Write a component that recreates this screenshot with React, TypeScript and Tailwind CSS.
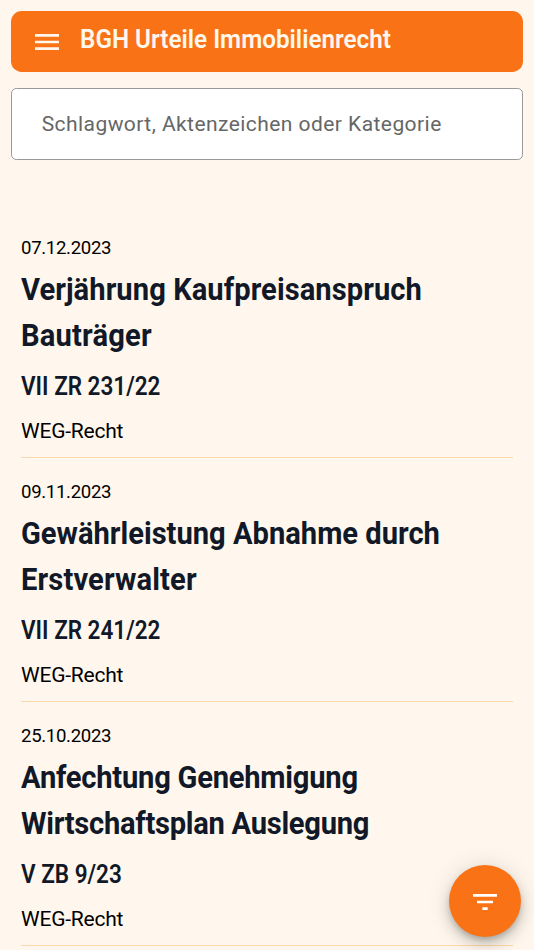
const rulings = [
  {
    id: 1,
    date: "07.12.2023",
    lines: [
      { text: "Verjährung Kaufpreisanspruch", tracking: "tracking-[0.07px]" },
      { text: "Bauträger", tracking: "tracking-[0.2px]" },
    ],
    file: "VII ZR 231/22",
    category: "WEG-Recht",
  },
  {
    id: 2,
    date: "09.11.2023",
    lines: [
      { text: "Gewährleistung Abnahme durch", tracking: "tracking-normal" },
      { text: "Erstverwalter", tracking: "tracking-[0.15px]" },
    ],
    file: "VII ZR 241/22",
    category: "WEG-Recht",
  },
  {
    id: 3,
    date: "25.10.2023",
    lines: [
      { text: "Anfechtung Genehmigung", tracking: "tracking-[-0.25px]" },
      { text: "Wirtschaftsplan Auslegung", tracking: "tracking-[-0.3px]" },
    ],
    file: "V ZB 9/23",
    category: "WEG-Recht",
  },
];

export default function App() {
  return (
    <div className="relative flex h-[950px] w-full flex-col overflow-hidden bg-[#fff7ed] font-['Roboto',sans-serif] text-black">
      <header className="mx-[10.67px] mt-[10.67px] flex h-[61.67px] shrink-0 items-center rounded-[10.67px] bg-[#f97316] pl-6 text-[#fff7ed]">
        <svg className="mt-px" width="24" height="16" viewBox="0 0 24 16" fill="currentColor">
          <path d="M0 0h24v2.67H0zM0 6.67h24v2.67H0zM0 13.33h24V16H0z" />
        </svg>
        <h1 className="ml-[21px] origin-left scale-x-[0.932] pb-[3px] text-[26px] font-semibold whitespace-nowrap">
          BGH Urteile Immobilienrecht
        </h1>
      </header>

      <div className="mx-[10.67px] mt-[15.66px] flex h-[72px] shrink-0 items-center rounded-[5.33px] border border-[#999] bg-white pt-[2px] pl-[30px] text-[21px] tracking-[0.44px] text-[#666]">
        Schlagwort, Aktenzeichen oder Kategorie
      </div>

      <main className="mt-[54px] px-[21px]">
        {rulings.map((ruling) => (
          <article key={ruling.id} className="flex h-[244px] flex-col pt-[21px]">
            <p className="text-[18.6px] leading-[27px] tracking-[-0.32px]">{ruling.date}</p>
            <h2 className="mt-[4px] origin-left scale-x-[0.91] text-[32px] leading-[46.5px] font-bold text-[#111827]">
              {ruling.lines.map((line) => (
                <span key={line.text} className={`block whitespace-nowrap ${line.tracking}`}>
                  {line.text}
                </span>
              ))}
            </h2>
            <h3 className="mt-[9px] origin-left scale-x-[0.865] text-[26px] leading-[37px] font-semibold text-[#111827]">{ruling.file}</h3>
            <p className="mt-[10px] text-[21px] leading-[32px] tracking-[-0.22px]">{ruling.category}</p>
            <div className="mt-auto h-px bg-[#fed7aa]" />
          </article>
        ))}
      </main>

      <button className="absolute top-[864.67px] left-[448.67px] flex size-[72px] items-center justify-center rounded-full bg-[#f97316] pt-[2px] text-white shadow-[0_4px_6.67px_-1.33px_rgba(0,0,0,0.2),0_8px_13.33px_rgba(0,0,0,0.14),0_1.33px_24px_rgba(0,0,0,0.12)]">
        <svg width="24" height="16" viewBox="0 0 24 16" fill="currentColor">
          <path d="M0 0h24v2.67H0zM4 6.67h16v2.67H4zM9.33 13.33h5.34V16H9.33z" />
        </svg>
      </button>
    </div>
  );
}
